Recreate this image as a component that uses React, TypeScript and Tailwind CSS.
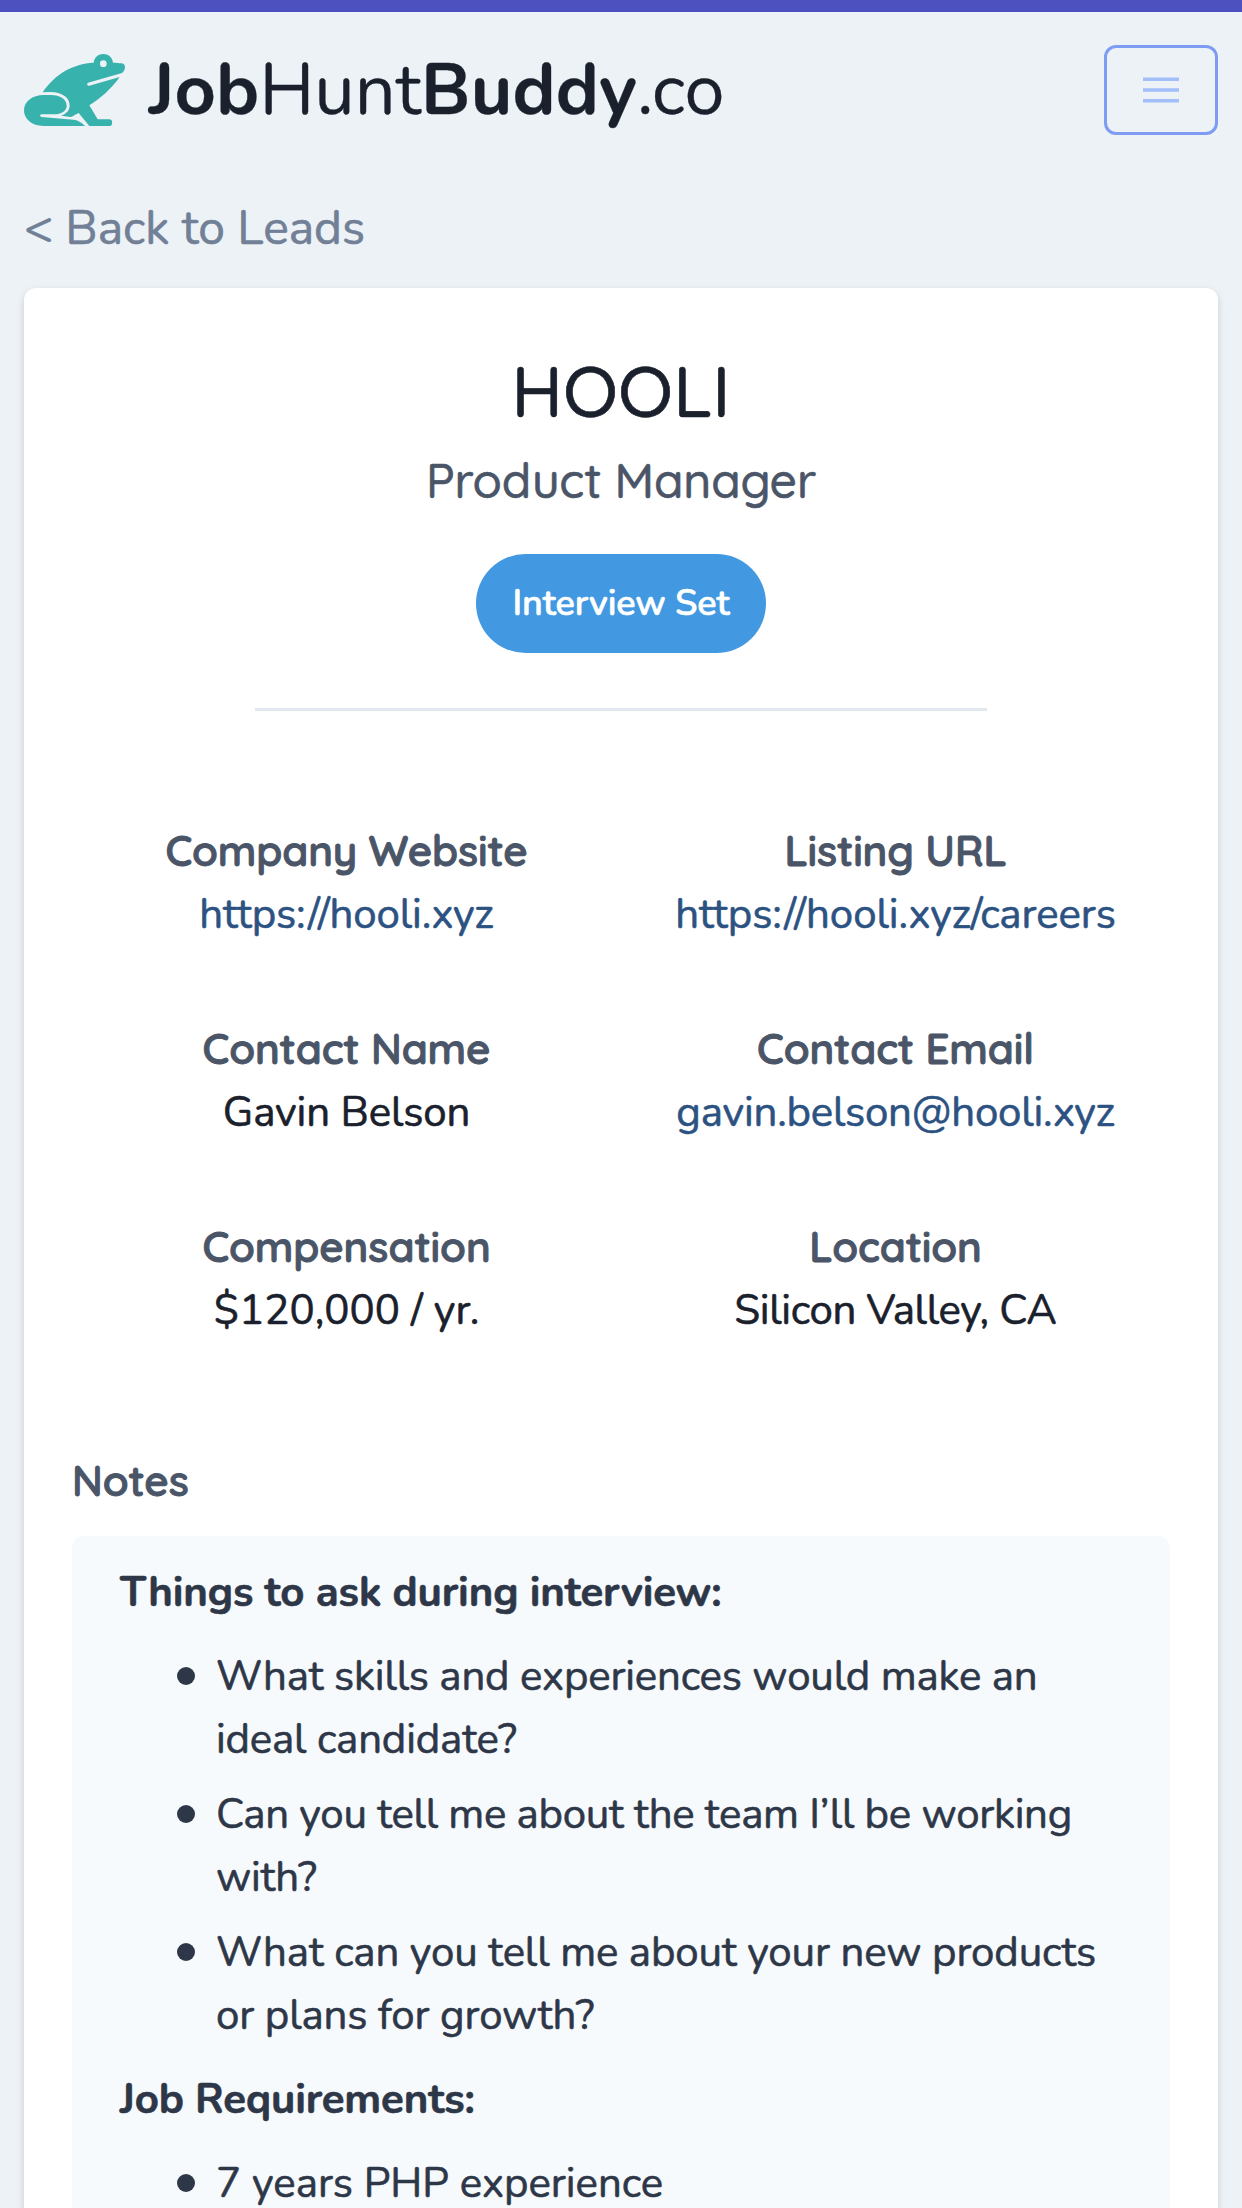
import React from "react";

type Field = { label: string; value: string; tone: string };

const fields: Field[] = [
  { label: "Company Website", value: "https://hooli.xyz", tone: "text-[#2c5282]" },
  { label: "Listing URL", value: "https://hooli.xyz/careers", tone: "text-[#2c5282] tracking-[-0.05px]" },
  { label: "Contact Name", value: "Gavin Belson", tone: "" },
  { label: "Contact Email", value: "gavin.belson@hooli.xyz", tone: "text-[#2c5282] tracking-[-0.2px]" },
  { label: "Compensation", value: "$120,000 / yr.", tone: "tracking-[0.05px]" },
  { label: "Location", value: "Silicon Valley, CA", tone: "tracking-[-0.34px]" },
];

type Note = { lines: string[]; tracking: string };

const questions: Note[] = [
  { lines: ["What skills and experiences would make an", "ideal candidate?"], tracking: "tracking-[-0.18px]" },
  { lines: ["Can you tell me about the team I’ll be working", "with?"], tracking: "tracking-[-0.29px]" },
  { lines: ["What can you tell me about your new products", "or plans for growth?"], tracking: "tracking-[-0.14px]" },
];

const requirements: Note[] = [{ lines: ["7 years PHP experience"], tracking: "tracking-normal" }];

function Frog() {
  return (
    <svg viewBox="72 162 303 216" className="h-[72px] w-[101px] shrink-0" fill="#38b2ac" aria-hidden="true">
      <path
        fillRule="evenodd"
        d="M128 277C165 222 219 191 281 188C283 172 295 162 310 162C325 162 337 172 339 188C349 188 357 189 365 190C372 191 375 196 375 201C375 208 372 215 366 219L264 248C259 251 262 258 268 257L359 231C333 268 303 293 268 316L293 358H327A9.5 10 0 0 1 327 378H268L236 339C228 343 220 348 213 351L183 347C200 341 209 330 209 317C209 291 185 277 152 276ZM310 181A10 10 0 1 0 310 201A10 10 0 1 0 310 181Z"
      />
      <path d="M130 378C95 378 72 357 72 331C72 305 96 285 132 285H152C181 285 200 298 200 317C200 333 184 343 162 343H125C119 343 119 351 125 351L220 359C237 361 244 368 256 378Z" />
    </svg>
  );
}

function NoteList({ items }: { items: Note[] }) {
  return (
    <ul className="my-[21px] flex flex-col gap-3">
      {items.map((item) => (
        <li key={item.lines[0]} className="flex pl-[57px]">
          <span className="mt-[22px] mr-[21px] size-[18px] shrink-0 rounded-full bg-[#2d3748]" />
          <div className={item.tracking}>
            {item.lines.map((line) => (
              <div key={line} className="whitespace-nowrap">{line}</div>
            ))}
          </div>
        </li>
      ))}
    </ul>
  );
}

export default function App() {
  return (
    <div className="h-[2208px] overflow-hidden border-t-12 border-[#4c51bf] bg-[#edf2f7] px-6 font-['Nunito','Lato',sans-serif] text-[42px] leading-[63px] tracking-[-0.13px] text-[#1a202c] [-webkit-text-stroke:0.6px]">
      <header className="flex h-[156px] items-center justify-between">
        <div className="flex items-center">
          <Frog />
          <div className="ml-6 text-[72px] leading-[108px] tracking-[0.08px] [-webkit-text-stroke:0.3px]">
            <span className="font-bold">Job</span>Hunt<span className="font-bold">Buddy</span>.co
          </div>
        </div>
        <button className="flex h-[90px] w-[114px] items-center justify-center rounded-xl border-3 border-[#7f9cf5]" aria-label="Menu">
          <svg viewBox="0 0 20 20" className="size-9" fill="#a3bffa">
            <path d="M0 3h20v2H0zM0 9h20v2H0zM0 15h20v2H0z" />
          </svg>
        </button>
      </header>

      <a className="mt-6 block text-[48px] leading-[72px] tracking-normal text-[#718096]">&lt; Back to Leads</a>

      <main className="mt-6 h-[2000px] rounded-xl bg-white px-12 pt-12 shadow-[0_3px_9px_rgba(0,0,0,0.1),0_3px_6px_rgba(0,0,0,0.06)]">
        <div className="flex flex-col items-center font-['Quicksand','Lato',sans-serif] font-medium">
          <h1 className="text-[72px] leading-[108px] tracking-normal">HOOLI</h1>
          <h2 className="text-[48px] leading-[72px] text-[#4a5568]">Product Manager</h2>
          <div className="mt-[38px] flex h-[99px] w-[290px] items-center justify-center rounded-full bg-[#4299e1] font-['Nunito','Lato',sans-serif] text-[36px] leading-[54px] font-semibold text-white">
            Interview Set
          </div>
          <div className="mt-[55px] h-[3px] w-[732px] bg-[#e2e8f0]" />
        </div>

        <dl className="mt-[108px] grid grid-cols-2 gap-y-[72px] text-center">
          {fields.map((f) => (
            <div key={f.label}>
              <dt className="font-['Quicksand','Lato',sans-serif] font-semibold tracking-[-0.12px] text-[#4a5568] [-webkit-text-stroke:1px]">{f.label}</dt>
              <dd className="-mb-px pt-px"><span className={f.tone}>{f.value}</span></dd>
            </div>
          ))}
        </dl>

        <h3 className="mt-[108px] font-['Quicksand','Lato',sans-serif] font-semibold tracking-[-0.12px] text-[#4a5568] [-webkit-text-stroke:1px]">Notes</h3>
        <section className="mt-6 h-[900px] rounded-xl bg-[#f7fafc] px-12 pt-[25px] text-[#2d3748]">
          <p className="font-bold">Things to ask during interview:</p>
          <NoteList items={questions} />
          <p className="font-bold">Job Requirements:</p>
          <NoteList items={requirements} />
        </section>
      </main>
    </div>
  );
}
